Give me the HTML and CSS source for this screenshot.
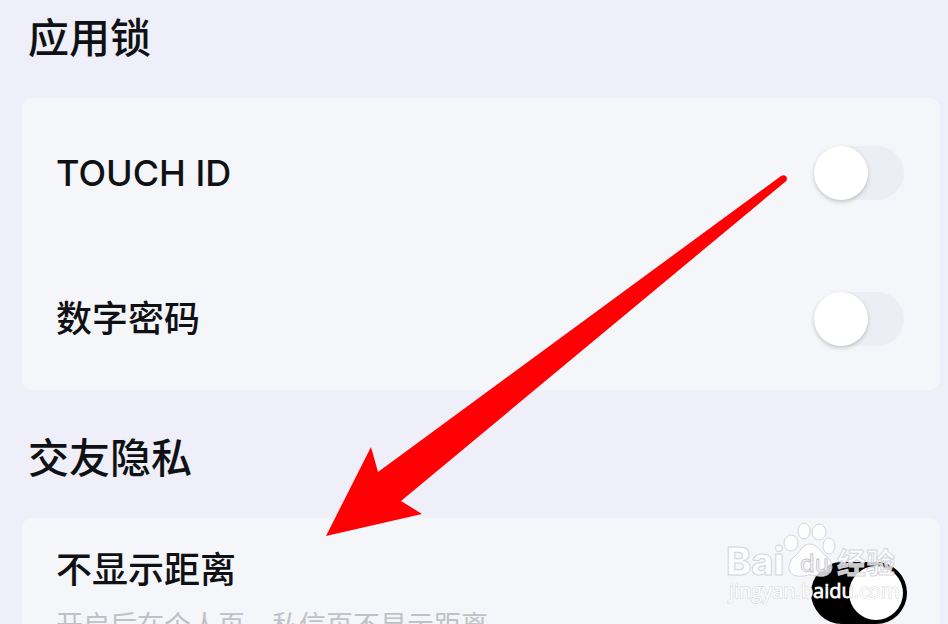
FILE: index.html
```html
<!DOCTYPE html>
<html lang="zh-CN">

<head>
    <meta charset="UTF-8">
    <meta name="viewport" content="width=device-width, initial-scale=1.0">
    <title>隐私设置</title>
    <link rel="stylesheet" href="styles.css">
</head>

<body>
    <main class="settings">
        <section class="group">
            <h2 class="title">应用锁</h2>
            <div class="card">
                <div class="row">
                    <label class="name" for="touchId">TOUCH ID</label>
                    <input class="switch" id="touchId" type="checkbox">
                </div>
                <div class="row">
                    <label class="name" for="passcode">数字密码</label>
                    <input class="switch" id="passcode" type="checkbox">
                </div>
            </div>
        </section>

        <section class="group">
            <h2 class="title">交友隐私</h2>
            <div class="card">
                <div class="row row-top">
                    <div class="info">
                        <label class="name" for="distance">不显示距离</label>
                        <p class="desc">开启后在个人页、私信页不显示距离</p>
                    </div>
                    <input class="switch" id="distance" type="checkbox" checked>
                </div>
            </div>
        </section>
    </main>

    <!-- 红色箭头 -->
    <svg class="arrow" width="462" height="362" viewBox="0 0 462 362" aria-hidden="true">
        <path d="M0 361 L45 272 L52 297 L455 1 Q460 -1 461 3 Q461 6 459 7 L75 326 L96 339 Z" fill="#ff0004" />
    </svg>

    <!-- 水印 -->
    <svg class="watermark" width="180" height="86" viewBox="0 0 180 86" aria-hidden="true">
        <g class="mark">
            <text class="mark-bai" x="4" y="53">Bai</text>
            <ellipse cx="69" cy="21" rx="7" ry="8" />
            <ellipse cx="82" cy="9" rx="6" ry="8" />
            <ellipse cx="97" cy="10" rx="7" ry="8" />
            <ellipse cx="107" cy="24" rx="6" ry="8" />
            <path d="M88 22 C80 22 78 30 72 35 C65 41 65 53 75 54 C81 55 84 53 89 53 C94 53 97 55 102 54 C112 52 112 41 105 35 C98 30 96 22 88 22 Z" />
            <text class="mark-cn" x="115" y="52">经验</text>
        </g>
        <text class="mark-du" x="78" y="50">du</text>
        <text class="mark-url" x="7" y="76">jingyan.baidu.com</text>
    </svg>
</body>

</html>
```

FILE: styles.css
```css
* {
    margin: 0;
    padding: 0;
    box-sizing: border-box;
}

body {
    height: 100vh;
    overflow: hidden;
    position: relative;
    background-color: #efeff9;
    color: #101114;
    font-family: Inter, "Noto Sans CJK SC", sans-serif;
}

.settings {
    height: 100%;
    overflow: hidden;
    padding: 8px 8px 0 22px;
}

.title {
    padding-left: 6px;
    font-size: 41px;
    line-height: 60px;
    font-weight: 500;
}

.card {
    display: flex;
    flex-direction: column;
    gap: 4px;
    margin: 30px 0 38px;
    padding-top: 4px;
    border-radius: 10px;
    background-color: #f5f6fa;
}

.row {
    display: flex;
    justify-content: space-between;
    align-items: center;
    height: 142px;
    padding: 0 36px 0 34px;
}

.row-top {
    padding-right: 33px;
}

.info {
    padding-top: 4px;
}

.name {
    display: block;
    font-size: 36px;
    line-height: 52px;
    font-weight: 500;
}

.desc {
    margin-top: 10px;
    font-size: 27px;
    line-height: 40px;
    color: #c0c1c6;
}

/* 开关 */
.switch {
    appearance: none;
    display: flex;
    align-items: center;
    width: 90px;
    height: 54px;
    border-radius: 27px;
    background-color: #ebeff3;
}

.switch::before {
    content: "";
    width: 54px;
    height: 54px;
    border-radius: 50%;
    background-color: #fff;
    box-shadow: 0 2px 4px rgba(0, 0, 0, 0.2);
}

.switch:checked {
    justify-content: flex-end;
    width: 96px;
    height: 62px;
    padding: 4px;
    border-radius: 31px;
    background-color: #000;
}

.arrow {
    position: absolute;
    left: 326px;
    top: 175px;
}

.watermark {
    position: absolute;
    right: 46px;
    bottom: 16px;
}

.mark {
    fill: rgba(255, 255, 255, 0.8);
    stroke: #d4d5da;
    stroke-width: 1px;
}

.mark-bai {
    font: 800 38px Inter, sans-serif;
}

.mark-cn {
    font: bold 29px "Noto Sans CJK SC", sans-serif;
}

.mark-du {
    font: 24px Inter, sans-serif;
    fill: #fff;
    stroke: #c8c9ce;
    stroke-width: 1px;
}

.mark-url {
    font: 20px "Open Sans", sans-serif;
    fill: #fff;
    stroke: #d0d1d6;
    stroke-width: 1px;
    paint-order: stroke;
}
```
